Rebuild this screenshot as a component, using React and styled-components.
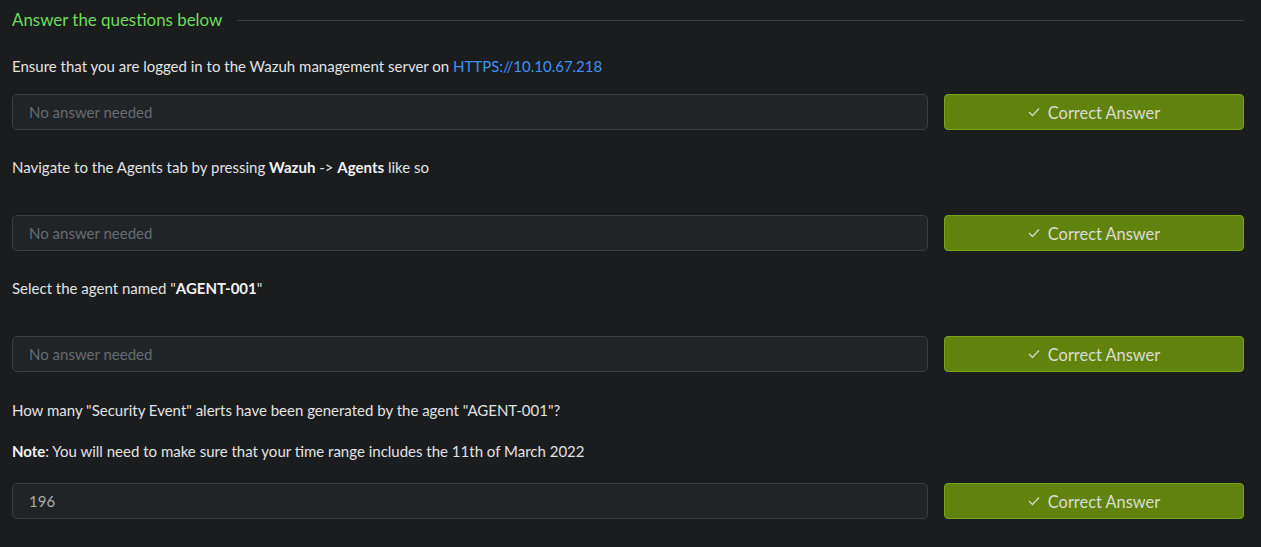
import React from "react";
import styled, { createGlobalStyle } from "styled-components";

const Global = createGlobalStyle`
  html, body { margin: 0; padding: 0; background: #1b1c1e; }
  body { font-family: Lato, "Liberation Sans", sans-serif; color: #e3e4e6; }
  * { box-sizing: border-box; }
`;

const Page = styled.div`
  width: 1261px;
  height: 547px;
  padding: 8px 17px 0 12px;
  background: #1b1c1e;
  overflow: hidden;
`;

const Header = styled.div`
  display: flex;
  align-items: center;
  height: 24px;
`;

const HeaderTitle = styled.h3`
  margin: 0;
  font-size: 16.9px;
  font-weight: 400;
  color: #6ddd5c;
  white-space: nowrap;
  line-height: 24px;
`;

const HeaderRule = styled.div`
  flex: 1;
  height: 1px;
  margin-left: 15px;
  background: #3b3e41;
`;

const Question = styled.section`
  margin-top: ${(p) => p.$top}px;
`;

const Para = styled.p`
  margin: 0 0 ${(p) => p.$after || 0}px;
  font-size: 15px;
  line-height: 21px;
  color: #e1e2e4;
`;

const Strong = styled.b`
  font-weight: 700;
  color: #f2f2f3;
`;

const Link = styled.a`
  color: #3d93f5;
  text-decoration: none;
`;

const AnswerRow = styled.div`
  display: grid;
  grid-template-columns: 1fr 300px;
  gap: 16px;
  margin-top: ${(p) => p.$gap}px;
  height: 36px;
`;

const AnswerInput = styled.div`
  display: flex;
  align-items: center;
  padding: 0 16px;
  background: #212427;
  border: 1px solid #3a3d41;
  border-radius: 5px;
  font-size: 15px;
  color: ${(p) => (p.$filled ? "#a9acaf" : "#676b70")};
`;

const CorrectButton = styled.div`
  display: flex;
  align-items: center;
  justify-content: center;
  gap: 8px;
  background: #62820e;
  border: 1px solid #78a517;
  border-radius: 4px;
  font-size: 16.4px;
  color: #d9ddd0;
`;

const Check = () => (
  <svg width="12" height="10" viewBox="0 0 12 10" fill="none">
    <polyline points="1,5 4.5,8.5 11,1.5" stroke="#d0d6c3" strokeWidth="1.4" />
  </svg>
);

const Row = ({ value, gap }) => (
  <AnswerRow $gap={gap}>
    <AnswerInput $filled={!!value}>{value || "No answer needed"}</AnswerInput>
    <CorrectButton>
      <Check />
      Correct Answer
    </CorrectButton>
  </AnswerRow>
);

export default function App() {
  return (
    <Page>
      <Global />
      <Header>
        <HeaderTitle>Answer the questions below</HeaderTitle>
        <HeaderRule />
      </Header>

      <Question $top={24}>
        <Para>
          Ensure that you are logged in to the Wazuh management server on{" "}
          <Link href="#">HTTPS://10.10.67.218</Link>
        </Para>
        <Row gap={17} />
      </Question>

      <Question $top={27}>
        <Para>
          Navigate to the Agents tab by pressing <Strong>Wazuh</Strong> -&gt;{" "}
          <Strong>Agents</Strong> like so
        </Para>
        <Row gap={37} />
      </Question>

      <Question $top={27}>
        <Para>
          Select the agent named "<Strong>AGENT-001</Strong>"
        </Para>
        <Row gap={37} />
      </Question>

      <Question $top={28}>
        <Para $after={20}>
          How many "Security Event" alerts have been generated by the agent "AGENT-001"?
        </Para>
        <Para>
          <Strong>Note</Strong>: You will need to make sure that your time range includes the 11th of March 2022
        </Para>
        <Row gap={21} value="196" />
      </Question>
    </Page>
  );
}
